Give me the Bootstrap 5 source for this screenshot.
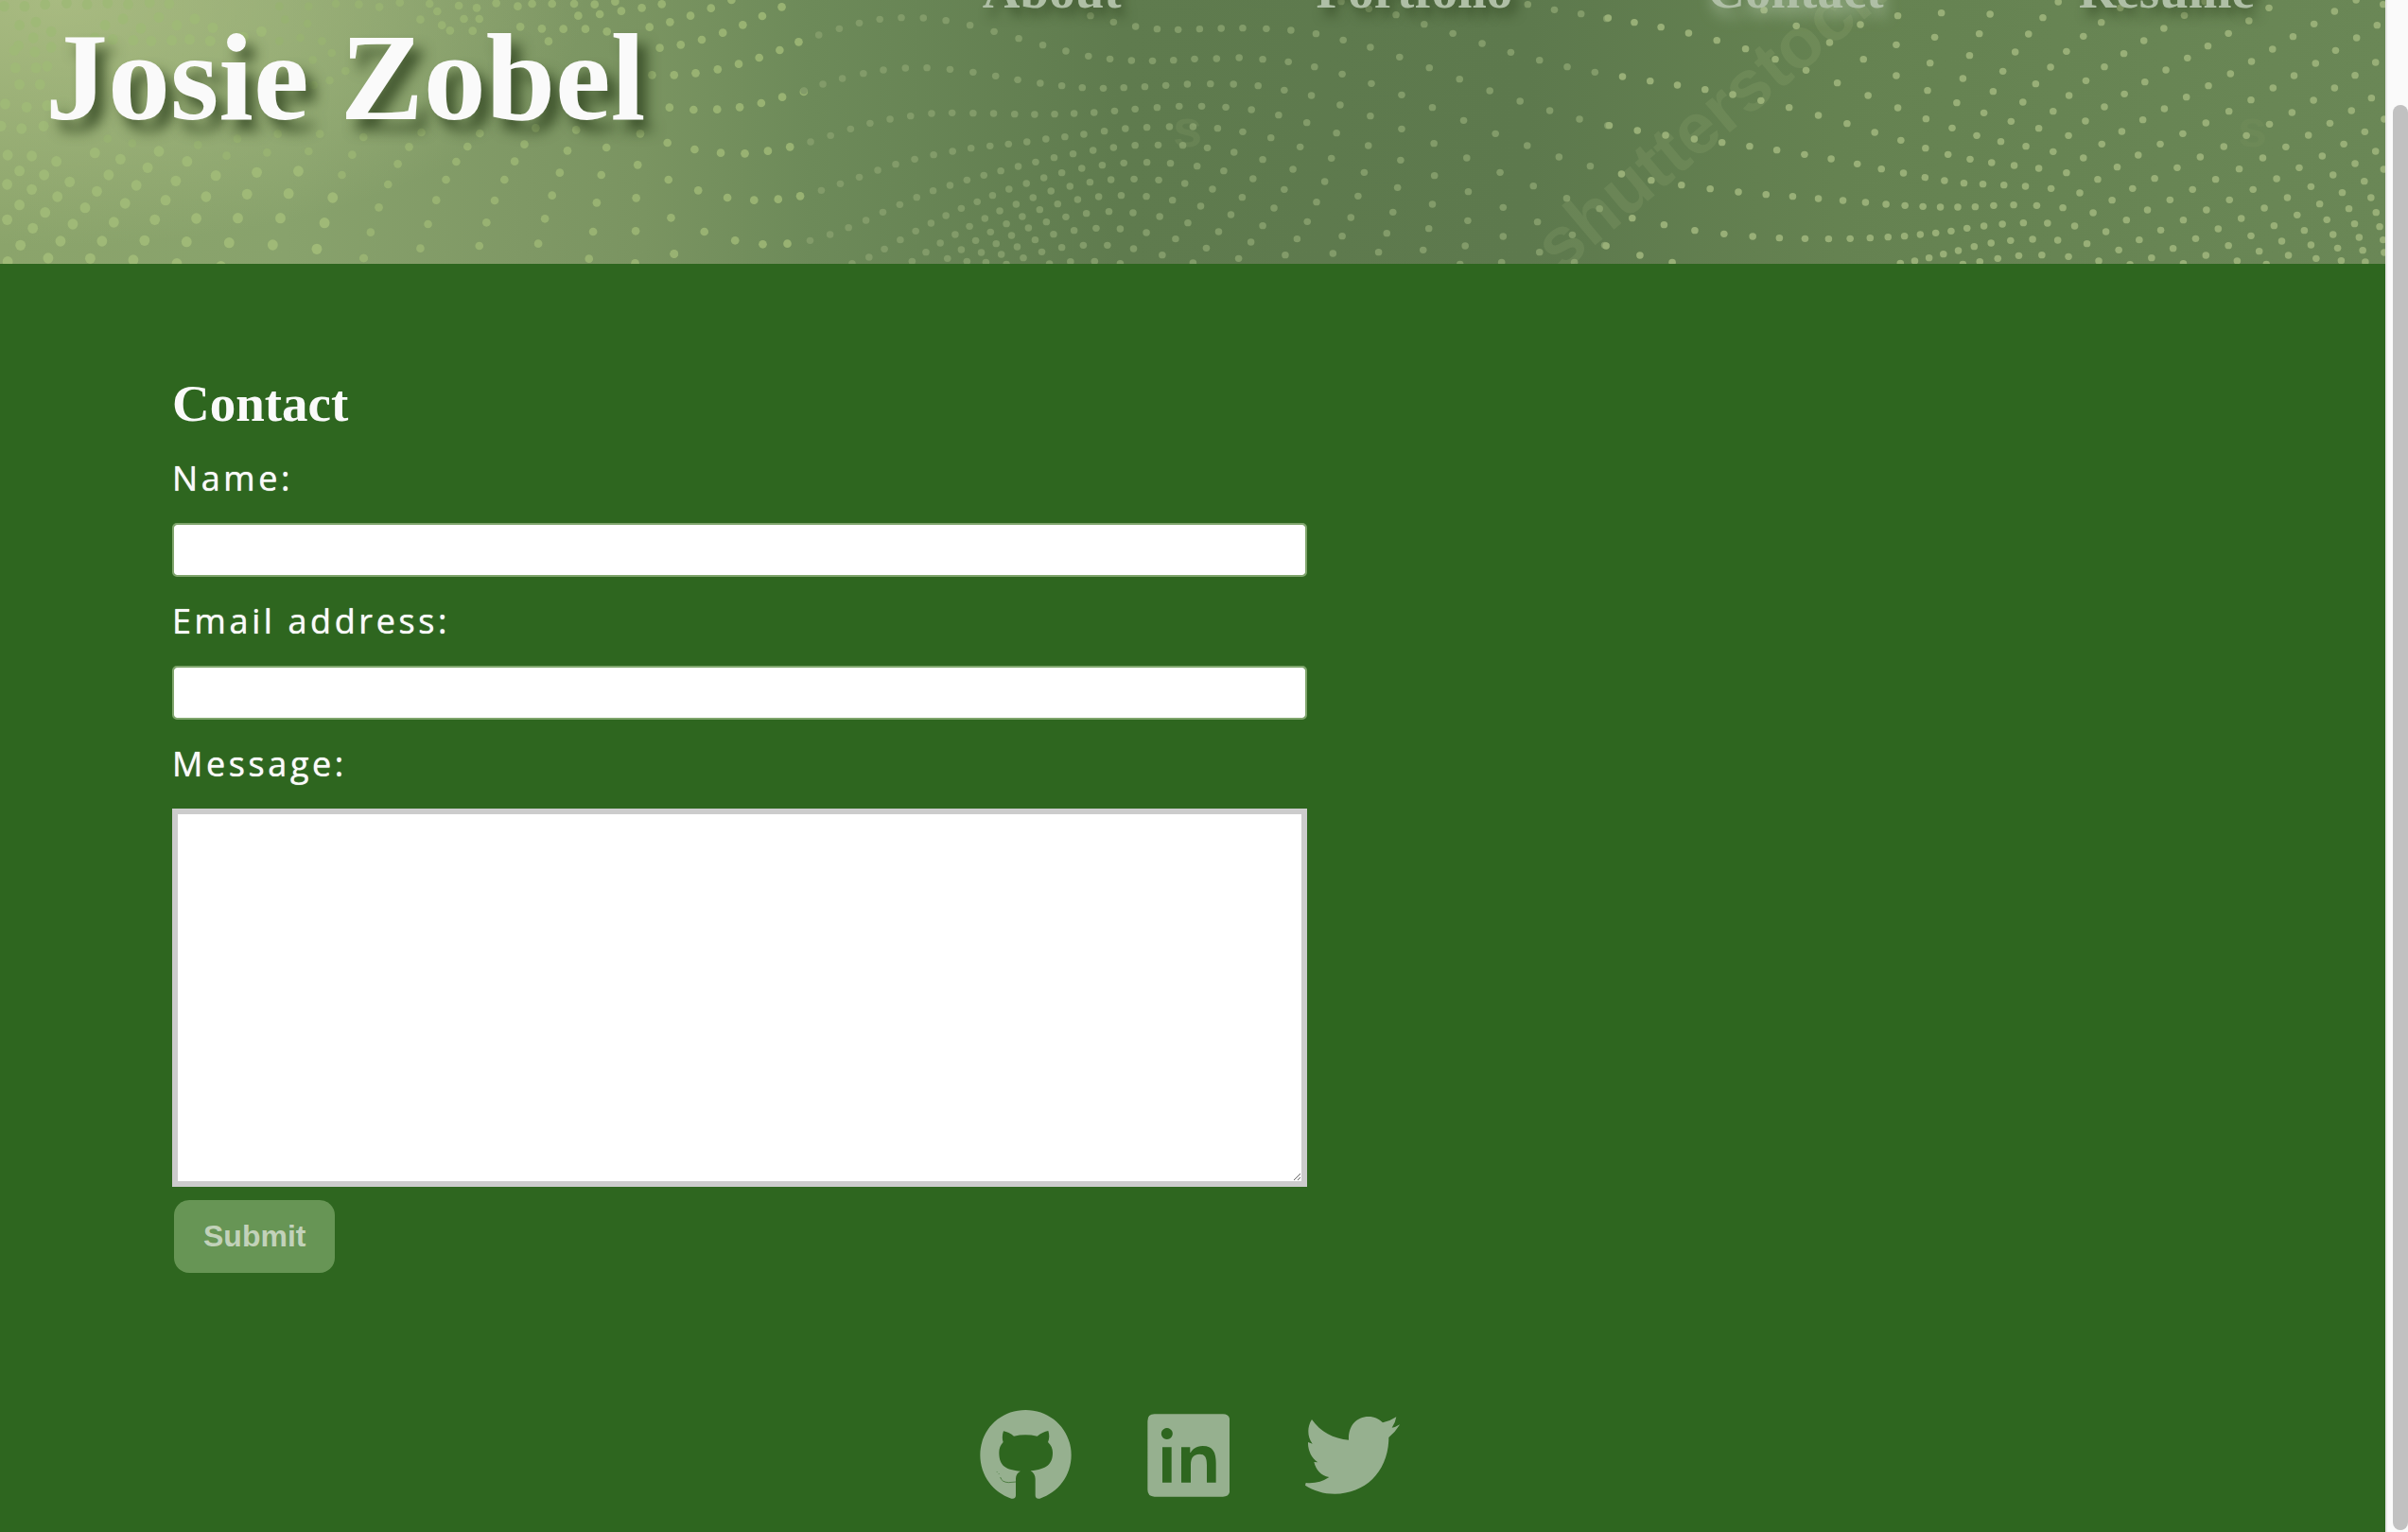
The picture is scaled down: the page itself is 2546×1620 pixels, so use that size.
<!DOCTYPE html>
<html lang="en">
<head>
<meta charset="utf-8">
<meta name="viewport" content="width=device-width, initial-scale=1">
<title>Josie Zobel</title>
<link href="https://cdn.jsdelivr.net/npm/bootstrap@5.3.0/dist/css/bootstrap.min.css" rel="stylesheet">
<style>
  body { background: #2e661f; color: #fafafa; font-family: "Open Sans", sans-serif; }
  .display-face { font-family: "Liberation Serif", serif; font-weight: 700; }
  .banner { height: 279px; background: radial-gradient(ellipse 560px 260px at 60px 0, rgba(178,194,136,.75), rgba(178,194,136,0)), linear-gradient(90deg, #8ba46b 0, #88a26c 12%, #7f9865 22%, #7a9461 27%, #6d8a59 34%, #5f7b4e 47%, #5d794d 64%, #658251 77%, #6a8756 100%); }
  .banner-art { z-index: 0; }
  .banner-row { padding: 0 138px 0 48px; z-index: 1; }
  .site-name { font-size: 132px; line-height: 164px; text-shadow: 10px 12px 14px rgba(40,60,25,.75); }
  .site-nav { margin-top: -50px; gap: 206px; }
  .site-nav a { font-size: 55px; line-height: 80px; color: #afbfa6; text-shadow: 6px 8px 12px rgba(40,60,25,.6); }
  .site-nav a.active { text-shadow: 4px 8px 16px rgba(190,210,180,.7); }
  .contact-area { padding: 112px 182px 0; }
  .contact-form { max-width: 1200px; }
  .contact-title { font-size: 55px; line-height: 72px; }
  .field-label { font-size: 36px; line-height: 54px; letter-spacing: .1em; text-shadow: 0 0 1px #fafafa; }
  .text-line, .text-block { margin: 20px 0; }
  .text-line { height: 57px; border: 2px solid #7fa56c; border-radius: 5px; }
  .text-block { height: 400px; border: 6px solid #ccc; border-radius: 0; margin-bottom: 14px; }
  .send { font: 700 32px/45px "Liberation Sans", sans-serif; margin-left: 2px; padding: 16px 31px; border: 0; border-radius: 16px; background: #679555; color: #c2d2ba; }
  .socials { gap: 80px; padding: 143px 6px 28px 0; }
  .socials svg { height: 100px; fill: #96b08f; display: block; }
  .scroll-rail { width: 24px; background: #fafafa; border-left: 2px solid #e8e8e8; padding: 111px 0 2px 6px; }
  .scroll-thumb { background: #c1c1c1; border-radius: 8px; }
</style>
<script src="https://cdn.jsdelivr.net/npm/bootstrap@5.3.0/dist/js/bootstrap.bundle.min.js"></script>
</head>
<body class="d-flex min-vh-100">
<div class="flex-grow-1 d-flex flex-column">
  <header class="banner position-relative overflow-hidden">
    <svg class="banner-art position-absolute top-0 start-0 w-100 h-100" viewBox="0 0 2522 279" preserveAspectRatio="xMidYMax slice" aria-hidden="true">
      <defs>
        <marker id="dot" markerUnits="userSpaceOnUse" markerWidth="20" markerHeight="32" refX="10" refY="16"><ellipse cx="10" cy="16" rx="7" ry="11" fill="#829b69"/></marker>
        <marker id="dotR" markerUnits="userSpaceOnUse" markerWidth="20" markerHeight="32" refX="10" refY="16"><ellipse cx="10" cy="16" rx="7" ry="11" fill="#98af77"/></marker>
        <marker id="dotL" markerUnits="userSpaceOnUse" markerWidth="24" markerHeight="40" refX="12" refY="20"><ellipse cx="12" cy="20" rx="10" ry="17" fill="#9fb977"/></marker>
        <marker id="dotM" markerUnits="userSpaceOnUse" markerWidth="24" markerHeight="40" refX="12" refY="20"><ellipse cx="12" cy="20" rx="8" ry="13" fill="#98b272"/></marker>
        <style>
          .m polyline { marker: url(#dot); fill: none; } .r polyline { marker: url(#dotR); fill: none; }
          .l polyline { marker: url(#dotL); fill: none; } .n polyline { marker: url(#dotM); fill: none; }
        </style>
      </defs>
      <!-- left field -->
      <g class="l" transform="scale(.542 .3333)">
        <polyline points="38,80 36,145 28,160 30,215 70,215 38,268 78,268 10,330 52,340 92,335 2,400 42,408 85,400"/>
        <polyline points="8,20 48,20 88,14 130,10 170,14 210,10 250,14 292,8 330,12"/>
        <polyline points="70,70 100,100 65,120 100,150 68,165 92,210 205,80 240,60 275,90 310,55 345,80 380,60 415,88"/>
        <polyline points="185,120 220,125 260,128 295,130 335,128 370,125 410,130 475,118 510,100"/>
        <polyline points="15,492 62,495 110,512 185,485 235,505 310,480 365,512"/>
        <polyline points="38,542 86,555 136,577 212,555 288,532"/>
        <polyline points="14,585 62,601 112,624 189,607 266,588 343,574 421,557 501,547 582,543"/>
        <polyline points="38,650 88,674 166,659 244,645 323,635 402,624 482,616 563,614 649,627"/>
        <polyline points="14,697 64,724 142,711 222,705 302,697 383,693 464,692 547,692 633,707"/>
        <polyline points="40,778 118,765 199,765 282,763 364,767 447,770 532,777 618,790"/>
        <polyline points="15,830 94,819 176,820 260,825 345,836 431,845"/>
      </g>
      <g class="n" transform="scale(.542 .3333)">
        <polyline points="210,440 258,455 386,460 463,440 542,425 624,425 709,435 822,420 936,423 1045,406 1124,412"/>
        <polyline points="442,494 521,484 602,480 687,491 776,520 870,570 965,636 1063,694 1157,735 1240,733"/>
        <polyline points="667,555 757,585 851,635 949,706 1050,773 1149,821 1239,835"/>
        <polyline points="739,658 835,711 935,780"/><polyline points="723,737 820,788"/><polyline points="709,819 710,819"/>
        <polyline points="798,466 890,513 984,570 1077,620 1164,643 1241,628"/>
        <polyline points="912,465 1004,512 1092,548 1173,555 1244,523"/>
        <polyline points="1023,458 1107,478 1183,468 1249,424"/>
        <polyline points="1302,453 1355,474 1406,485 1453,487 1498,479 1541,466"/>
        <polyline points="1304,570 1362,604 1419,627 1471,635 1518,632 1561,622"/>
        <polyline points="1309,691 1374,735 1434,763 1488,775 1536,773"/><polyline points="1315,805 1315,806"/>
        <polyline points="1306,341 1353,348 1399,347 1443,340 1485,327 1526,308 1568,291"/>
        <polyline points="1272,238 1315,238 1357,232 1400,220 1441,203 1481,183 1521,159 1558,133"/>
        <polyline points="1287,152 1328,142 1369,126 1410,104 1449,79 1487,51 1525,22"/>
        <polyline points="1267,86 1307,70 1347,50 1387,26 1427,0"/><polyline points="1212,35 1252,25 1291,13"/>
        <polyline points="545,20 602,20 655,12 700,14 740,22 780,8 838,12 853,36 895,18 930,25 968,10 1010,20 1038,12 1077,12 1120,12 1160,14 1200,5"/>
        <polyline points="556,62 600,75 628,130 586,120 545,130 610,190 647,168 674,225 643,255 612,270"/>
        <polyline points="820,62 862,80 878,97 905,60 922,98 935,60 1015,85 1057,91 1099,92 1142,92 1184,100 1070,131 1128,50 1170,45"/>
      </g>
      <!-- middle waves -->
      <g class="m" transform="translate(850) scale(.542 .3333)">
        <polyline points="29,111 69,91 108,73 148,61 190,56 233,57 277,65 324,80 371,100 419,122 466,143 511,162 555,178 597,187 639,192 680,193 721,191 762,187 805,186 849,183 895,188 945,196 996,212 1050,235 1107,265 1166,301 1226,341 1287,382 1349,424 1411,462 1473,498 1534,527"/>
        <polyline points="0,288 37,267 75,249 116,233 155,222 198,216 240,215 285,220 330,229 374,241 417,253 461,264 503,272 543,278 584,280 624,278 665,275 706,271 748,267 793,266 838,267 886,272 937,286 990,303 1046,333 1105,368 1166,409 1229,455 1293,501 1358,547 1423,590 1488,629 1552,662"/>
        <polyline points="559,50 604,70 647,84 689,92 730,94 772,92 814,90 856,89 902,91 950,96 999,107 1052,127 1105,150 1162,181 1220,215 1279,251 1338,288 1397,321 1455,351 1513,378 1568,398"/>
        <polyline points="13,450 52,430 91,409 129,391 168,378 208,368 249,360 289,358 330,359 370,360 411,362 450,363 489,362 527,360 566,357 606,352 646,346 689,341 732,337 776,337 823,340 873,348 926,365 981,389 1039,422 1101,462 1164,508 1230,557 1296,608 1364,658 1431,704 1499,745 1562,778"/>
        <polyline points="34,604 71,583 108,562 144,540 179,521 216,505 253,491 290,480 326,470 363,463 399,457 435,450 472,441 509,434 546,426 586,416 627,408 669,404 713,402 759,402 807,407 856,418 911,437 968,466 1029,502 1093,547 1158,595 1226,648 1295,700 1364,750 1435,800 1503,832"/>
        <polyline points="12,763 51,744 87,722 121,699 154,673 187,649 220,626 252,605 285,588 318,571 351,556 384,542 418,528 452,514 488,500 525,488 564,477 604,468 646,461 691,460 739,461 787,469 839,483 895,506 954,537 1016,576 1081,622 1149,673 1219,725 1290,780 1361,832"/>
        <polyline points="94,836 127,816 157,790 188,761 218,733 248,708 277,684 307,661 338,640 368,620 400,600 434,582 468,564 503,548 542,534 582,524 624,517 669,515 715,518 767,527 819,542 876,567 937,601 1000,641 1067,690 1137,740 1208,793 1280,838"/>
        <polyline points="211,829 238,800 266,771 295,744 323,718 353,693 382,669 414,648 447,627 482,606 519,591 558,578 599,570 644,568 692,571 743,582 797,600 855,626 917,660 982,703 1050,749 1121,800"/>
        <polyline points="280,820 307,792 335,763 364,736 395,710 426,687 460,665 495,647 534,633 575,624 619,620 668,623 719,635 774,654 833,681 895,716 962,758 1032,804"/>
        <polyline points="318,829 346,801 375,773 405,747 438,723 473,704 511,688 551,677 595,671 642,675 694,687 749,707 809,735 872,768 939,809"/>
        <polyline points="355,832 385,807 416,783 451,761 487,743 527,731 570,724 617,726 668,738 725,758 785,787 848,820"/>
        <polyline points="395,838 428,818 464,799 503,785 545,778 592,778 643,789 699,809 759,834"/><polyline points="479,837 520,830 567,829 617,836"/>
        <polyline points="1048,5 1102,28 1155,47 1210,77 1266,106 1323,138 1379,166 1435,191 1489,212 1543,229"/>
        <polyline points="1412,14 1464,31 1516,44 1566,59"/>
      </g>
      <!-- right fan -->
      <g class="r" transform="translate(1696) scale(.542 .3333)">
        <polyline points="8,57 59,71 111,86 165,105 220,128 276,155 334,188 394,223 455,263 515,303 573,342 628,377 679,406 727,430 774,449 823,464 876,481 935,501 1001,530 1074,566 1148,601 1220,634 1288,660 1352,682 1410,697 1464,710 1513,719"/>
        <polyline points="36,243 90,257 143,270 197,284 251,300 306,319 361,341 418,366 474,392 528,420 579,445 627,470 671,490 714,505 756,516 800,525 848,534 902,548 963,569 1031,598 1104,634 1175,666 1243,693 1307,716 1366,731 1422,744 1473,753 1520,761"/>
        <polyline points="10,398 65,414 120,429 176,441 230,452 284,464 337,476 391,490 443,504 494,520 541,536 584,549 626,563 664,573 702,581 739,584 780,587 822,591 872,598 928,612 991,635 1060,666 1130,698 1198,726 1262,748 1322,765 1379,777 1431,787 1480,794 1522,801"/>
        <polyline points="34,552 92,572 151,587 207,599 262,609 316,617 368,623 418,630 466,636 510,642 550,648 587,652 622,655 656,657 690,657 724,656 760,652 799,650 844,652 895,659 954,675 1019,698 1086,730 1154,757 1218,779 1278,797 1335,810 1389,820 1438,827 1485,831"/>
        <polyline points="55,692 117,713 177,731 234,742 290,750 342,755 392,757 438,758 480,757 519,755 554,752 586,749 617,744 647,739 677,733 708,724 741,717 777,711 818,707 865,708 918,717 979,735 1044,761 1110,788 1174,810 1235,828 1292,838"/>
        <polyline points="4,780 70,810 133,832"/>
        <polyline points="578,835 606,828 634,818 662,806 691,795 722,782 755,771 793,763 836,759 885,762 942,773 1004,793 1068,818 1130,836"/>
        <polyline points="700,838 733,830 768,820 809,811 854,809 906,814 965,828 1026,839"/>
        <polyline points="312,32 375,82 440,135 506,188 570,240 631,287 688,326 741,358 794,385 848,407 906,430 971,457 1042,492 1118,532 1193,569 1266,601 1333,627 1396,647 1453,662 1506,674"/>
        <polyline points="500,78 570,142 636,200 700,249 759,290 817,324 876,353 939,384 1010,417 1085,457 1163,498 1239,536 1312,567 1379,592 1440,611 1496,627"/>
        <polyline points="573,50 645,118 713,176 778,226 842,266 907,303 976,339 1051,380 1129,424 1209,465 1285,501 1356,532 1422,555 1483,575"/>
        <polyline points="658,41 732,107 802,165 871,213 940,256 1015,298 1093,345 1174,390 1253,430 1330,466 1401,495 1465,519 1521,537"/>
        <polyline points="753,45 828,108 902,163 976,212 1055,260 1136,308 1219,353 1298,394 1374,429 1443,457 1505,480"/>
        <polyline points="856,56 935,115 1014,170 1096,222 1179,272 1262,317 1342,357 1416,391 1484,418"/>
        <polyline points="886,6 970,71 1053,129 1138,184 1222,234 1305,279 1384,318 1458,351 1522,378"/>
        <polyline points="1007,25 1092,90 1178,146 1263,195 1346,240 1425,279 1497,311"/>
        <polyline points="1132,49 1218,106 1304,156 1388,201 1465,239"/><polyline points="1172,5 1258,66 1344,116 1427,160 1505,198"/>
        <polyline points="1297,25 1385,76 1468,120"/><polyline points="1425,36 1508,80"/><polyline points="1467,0 1520,14"/>
      </g>
      <g font-family="Liberation Sans, sans-serif" font-weight="700" fill="#a9bd83">
        <text x="1650" y="290" transform="rotate(-40 1650 290)" font-size="76" opacity=".15">shutterstock</text>
        <text x="1240" y="155" font-size="56" opacity=".12">s</text>
        <text x="2366" y="155" font-size="56" opacity=".06">s</text>
      </g>
    </svg>
    <div class="banner-row position-relative d-flex justify-content-between align-items-start">
      <h1 class="site-name display-face m-0 text-nowrap">Josie Zobel</h1>
      <nav class="site-nav d-flex" aria-label="Main">
        <a class="display-face text-decoration-none" href="#about">About</a>
        <a class="display-face text-decoration-none" href="#portfolio">Portfolio</a>
        <a class="display-face text-decoration-none active" href="#contact" aria-current="page">Contact</a>
        <a class="display-face text-decoration-none" href="#resume">Resume</a>
      </nav>
    </div>
  </header>
  <main class="contact-area" id="contact">
    <form class="contact-form">
      <h2 class="contact-title display-face m-0 mb-3">Contact</h2>
      <label class="field-label d-block" for="name">Name:</label>
      <input class="text-line form-control" id="name" type="text">
      <label class="field-label d-block" for="email">Email address:</label>
      <input class="text-line form-control" id="email" type="email">
      <label class="field-label d-block" for="message">Message:</label>
      <textarea class="text-block form-control" id="message"></textarea>
      <button class="send btn d-block" type="submit">Submit</button>
    </form>
  </main>
  <footer class="socials d-flex justify-content-center">
    <a href="#github" aria-label="GitHub"><svg viewBox="106 87 291 300"><path d="M251 93C170 93 107 156 107 236C107 300 148 354 206 374C215 376 220 371 220 364V310C220 300 226 291 235 287C190 283 167 272 167 228C167 215 171 205 180 195C176 184 177 172 181 160C192 162 203 167 214 176Q250 168 288 176C300 167 311 161 323 159C327 172 327 184 322 195C332 205 337 215 337 228C337 265 318 281 267 286C276 291 282 301 282 312V364C282 371 287 376 296 374C355 354 396 300 396 236C396 156 332 93 251 93Z"/><path d="M160 289l2 2M166 295l2 2M171 306q4 16 26 17l23-2" fill="none" stroke="#2e661f" stroke-width="2"/></svg></a>
    <a href="#linkedin" aria-label="LinkedIn"><svg viewBox="636 87 263 300"><path fill-rule="evenodd" d="M659 106H876Q898 106 898 128V346Q898 368 876 368H659Q637 368 637 346V128Q637 106 659 106ZM698 150a18 18 0 1 0 1 0ZM684 211V323H713V211ZM744 211V323H774V267C774 248 780 233 802 233C822 233 825 250 825 268V323H854V262C854 228 845 207 812 207C790 207 778 219 774 228H772V211Z"/></svg></a>
    <a href="#twitter" aria-label="Twitter"><svg viewBox="1142 87 301 300"><path d="M1163 123C1190 162 1232 184 1280 188C1278 145 1303 114 1343 114C1362 114 1377 122 1388 133Q1410 129 1431 115Q1428 134 1417 149Q1430 147 1443 138Q1429 162 1407 180C1407 285 1335 359 1236 359C1200 359 1168 349 1142 332L1144 324Q1185 328 1218 306C1192 302 1176 282 1170 258L1182 259C1162 246 1150 220 1151 195L1165 200C1150 180 1146 150 1163 123Z"/></svg></a>
  </footer>
</div>
<div class="scroll-rail d-flex" aria-hidden="true"><div class="scroll-thumb flex-grow-1"></div></div>
</body>
</html>
